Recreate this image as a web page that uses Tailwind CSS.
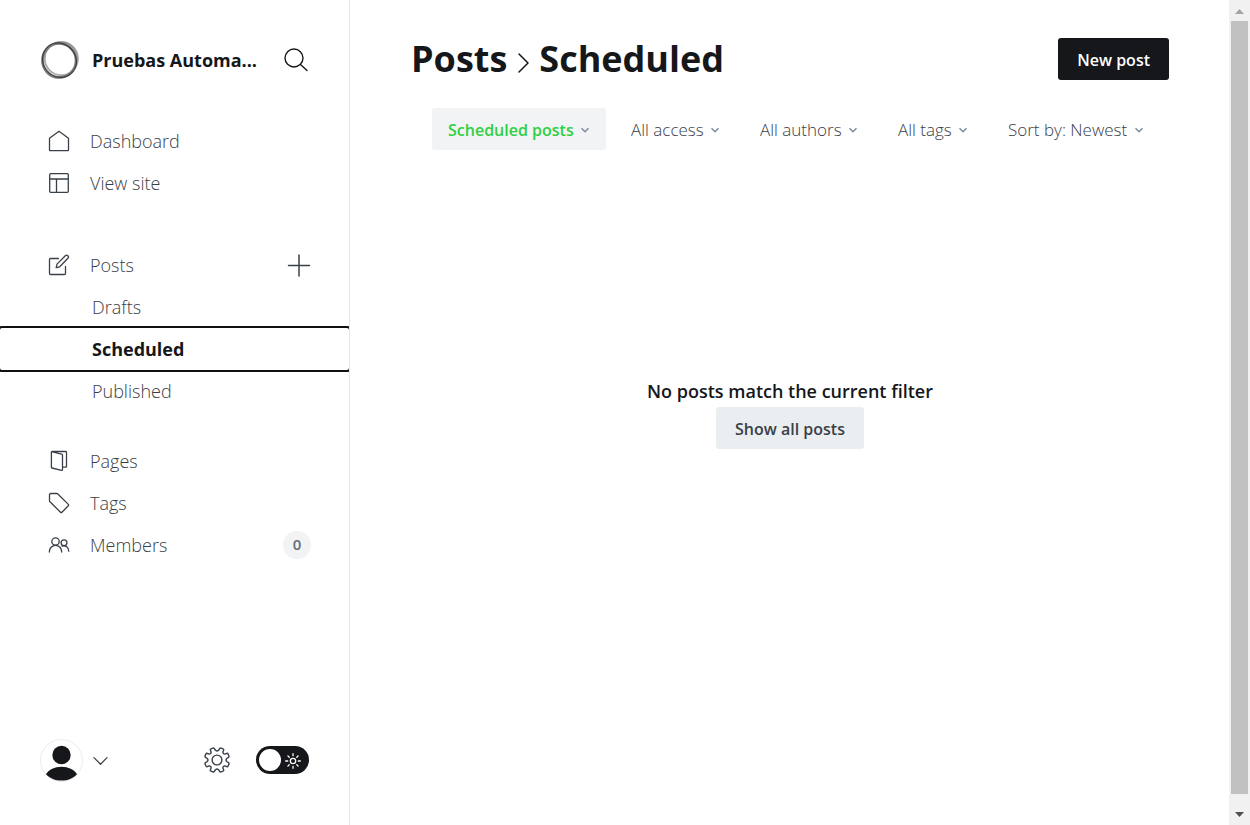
<!DOCTYPE html>
<html lang="en">
<head>
<meta charset="utf-8">
<meta name="viewport" content="width=device-width, initial-scale=1">
<title>Posts - Scheduled</title>
<script src="https://cdn.jsdelivr.net/npm/@tailwindcss/browser@4"></script>
</head>
<body class="flex h-screen overflow-hidden bg-white font-['Open_Sans','Noto_Sans',sans-serif] text-lg text-[#394047]">

<nav class="flex w-[350px] shrink-0 flex-col overflow-hidden border-r border-[#e5e7e9] bg-white font-light" aria-label="Main">
  <div class="flex h-[120px] items-center pl-10 pr-[41px]">
    <svg class="size-10 shrink-0" viewBox="0 0 40 40" fill="none" aria-hidden="true">
      <circle cx="19" cy="20.500" r="16.800" stroke="#444" stroke-width="2.200" opacity=".7"/>
      <circle cx="21.300" cy="18.600" r="16.600" stroke="#888" stroke-width="2" opacity=".7"/>
      <ellipse cx="20.300" cy="20" rx="18" ry="16.600" stroke="#777" stroke-width="2" opacity=".6" transform="rotate(115 20 20)"/>
      <ellipse cx="19.800" cy="20.500" rx="17.800" ry="16.300" stroke="#222" stroke-width="1.200" opacity=".7" transform="rotate(50 20 20)"/>
    </svg>
    <span class="ml-3 flex-1 truncate text-lg font-bold text-[#15171a]">Pruebas Automa...</span>
    <button class="flex size-6 shrink-0 items-center justify-center" aria-label="Search">
      <svg class="size-6" viewBox="0 0 24 24" fill="none" stroke="#15171a" stroke-width="1.4" stroke-linecap="round" aria-hidden="true"><circle cx="10" cy="10" r="9"/><path d="M16.5 16.5 23 22.5"/></svg>
    </button>
  </div>

  <ul>
    <li><a href="#" class="flex h-[42px] items-center gap-5 pl-12">
      <svg class="size-[22px]" viewBox="0 0 22 22" fill="none" stroke="currentColor" stroke-width="1.3" stroke-linejoin="round" aria-hidden="true"><path d="M1.5 8.2 11 1.3l9.500 6.900V20a.7.7 0 0 1-.7.700H2.200a.7.7 0 0 1-.7-.700Z"/></svg>
      Dashboard</a></li>
    <li><a href="#" class="flex h-[42px] items-center gap-5 pl-12">
      <svg class="size-[22px]" viewBox="0 0 22 22" fill="none" stroke="currentColor" stroke-width="1.3" aria-hidden="true"><rect x="1.700" y="1.700" width="18.600" height="18.600" rx="1"/><path d="M1.700 7h18.600M8.500 7v13.300"/></svg>
      View site</a></li>
  </ul>

  <ul class="mt-10">
    <li class="flex h-[42px] items-center justify-between pr-[38px]">
      <a href="#" class="flex items-center gap-5 pl-12">
      <svg class="size-[22px]" viewBox="0 0 22 22" fill="none" stroke="currentColor" stroke-width="1.3" stroke-linejoin="round" stroke-linecap="round" aria-hidden="true"><path d="M10.500 4.500H2.500a1 1 0 0 0-1 1V19.500a1 1 0 0 0 1 1H16.500a1 1 0 0 0 1-1V12.500M8.200 13.700l.8-3.600 8.300-8.300a1.750 1.750 0 0 1 2.600 2.500L11.700 12.800Z"/></svg>
      Posts</a>
      <button class="flex size-6 items-center justify-center" aria-label="New post">
        <svg class="size-6" viewBox="0 0 24 24" stroke="#394047" stroke-width="1.5" stroke-linecap="round" aria-hidden="true"><path d="M12 2v21M1.500 12.500h21"/></svg>
      </button>
    </li>
    <li><a href="#" class="flex h-[42px] items-center pl-[92px]">Drafts</a></li>
    <li><a href="#" aria-current="page" class="flex h-[42px] items-center rounded-[2px] pl-[92px] font-bold text-[#15171a] outline-2 outline-[#101010]">Scheduled</a></li>
    <li><a href="#" class="flex h-[42px] items-center pl-[92px]">Published</a></li>
  </ul>

  <ul class="mt-7">
    <li><a href="#" class="flex h-[42px] items-center gap-5 pl-12">
      <svg class="size-[22px]" viewBox="0 0 22 22" fill="none" stroke="currentColor" stroke-width="1.3" stroke-linejoin="round" aria-hidden="true"><path d="M3.500 1.700 13.700 4.200a1 1 0 0 1 .8.900V19.600a.8.800 0 0 1-1 .8L4 18a.8.800 0 0 1-.6-.8V2.300a.8.800 0 0 1 .8-.8H17.700a.8.800 0 0 1 .8.800V16.400a.8.800 0 0 1-.8.800H14.500"/></svg>
      Pages</a></li>
    <li><a href="#" class="flex h-[42px] items-center gap-5 pl-12">
      <svg class="size-[22px]" viewBox="0 0 22 22" fill="none" stroke="currentColor" stroke-width="1.3" stroke-linejoin="round" aria-hidden="true"><path d="M1.500 2.700a1.200 1.200 0 0 1 1.200-1.200H8.600a1.800 1.800 0 0 1 1.300.5L20.300 12.400a1 1 0 0 1 0 1.400L13.900 20.200a1 1 0 0 1-1.400 0L2 9.800A1.800 1.800 0 0 1 1.500 8.500Z"/></svg>
      Tags</a></li>
    <li class="flex h-[42px] items-center justify-between pr-[38px]">
      <a href="#" class="flex items-center gap-5 pl-12">
      <svg class="size-[22px]" viewBox="0 0 22 22" fill="none" stroke="currentColor" stroke-width="1.300" stroke-linecap="round" aria-hidden="true"><circle cx="7.500" cy="7.500" r="3.700"/><circle cx="16" cy="8.800" r="2.900"/><path d="M1.300 18c0-3.700 2.600-6.700 6.200-6.700s6.200 3 6.200 6.700M14 12.100c3.700-1.300 6.800 1.500 6.800 5.100"/></svg>
      Members</a>
      <span class="flex size-7 items-center justify-center rounded-full bg-[#f1f3f4] text-[15px] font-semibold text-[#626d79]">0</span>
    </li>
  </ul>

  <div class="mt-auto flex h-[130px] items-center pl-10 pr-10">
    <button class="flex items-center gap-2.5" aria-label="Account menu">
      <svg class="size-[43px]" viewBox="0 0 43 43" fill="none" aria-hidden="true"><circle cx="21.500" cy="21.500" r="21" stroke="#e8eaec"/><circle cx="21.500" cy="16" r="9.200" fill="#15171a"/><path d="M6 35.200C9 30.500 14.500 27.700 21.500 27.700S34 30.500 37 35.200C33 39.300 28 41.500 21.500 41.500S10 39.300 6 35.200Z" fill="#15171a"/></svg>
      <svg class="size-[15px]" viewBox="0 0 16 16" fill="none" stroke="#394047" stroke-width="1.300" stroke-linecap="round" stroke-linejoin="round" aria-hidden="true"><path d="m1 5 7 7 7-7"/></svg>
    </button>
    <a href="#" class="ml-auto" aria-label="Settings">
      <svg class="size-[26px]" viewBox="-13 -13 26 26" fill="none" stroke="#394047" stroke-width="1.400" stroke-linejoin="round" aria-hidden="true"><circle r="4.900"/><path d="M-1.500-9.700Q0-8.400 1.500-9.700L2.700-11.500Q3.200-12.300 4.100-11.900L6-11.100Q6.900-10.700 6.700-9.900L5.900-7.900Q5.900-5.900 7.900-5.900L9.900-6.700Q10.700-6.900 11.100-6L11.900-4.100Q12.300-3.200 11.500-2.700L9.700-1.500Q8.400 0 9.700 1.500L11.500 2.700Q12.300 3.200 11.900 4.100L11.100 6Q10.700 6.900 9.900 6.700L7.900 5.900Q5.900 5.900 5.900 7.900L6.700 9.900Q6.900 10.700 6 11.100L4.100 11.900Q3.200 12.300 2.700 11.500L1.500 9.700Q0 8.400-1.500 9.700L-2.700 11.500Q-3.200 12.300-4.100 11.900L-6 11.100Q-6.900 10.700-6.700 9.900L-5.900 7.900Q-5.900 5.900-7.900 5.900L-9.900 6.700Q-10.700 6.900-11.100 6L-11.900 4.100Q-12.300 3.200-11.500 2.700L-9.700 1.500Q-8.400 0-9.700-1.500L-11.500-2.700Q-12.300-3.200-11.900-4.100L-11.100-6Q-10.700-6.900-9.900-6.700L-7.900-5.900Q-5.900-5.900-5.900-7.900L-6.700-9.900Q-6.900-10.700-6-11.100L-4.100-11.900Q-3.200-12.300-2.700-11.500Z"/></svg>
    </a>
    <label class="ml-[26px] flex h-7 w-[53px] items-center justify-between rounded-full bg-[#15171a] pl-[3px] pr-2">
      <input type="checkbox" class="size-[22px] appearance-none rounded-full bg-white" aria-label="Dark mode">
      <svg class="mt-0.5 size-4" viewBox="0 0 16 16" fill="none" stroke="#fff" stroke-width="1.300" stroke-linecap="round" aria-hidden="true"><circle cx="8" cy="8" r="2.700"/><path d="M8 .7v2M8 13.300v2M.7 8h2M13.300 8h2M2.900 2.900l1.300 1.300M11.800 11.800l1.300 1.300M2.900 13.100l1.300-1.300M11.800 4.200l1.300-1.300"/></svg>
    </label>
  </div>
</nav>

<main class="flex min-w-0 flex-1 flex-col pl-[61px] pr-[60px]">
  <header>
    <div class="flex h-[108px] items-center justify-between pt-2.5">
      <h1 class="flex items-center gap-2 text-4xl font-bold text-[#15171a]">
        <a href="#">Posts</a>
        <svg class="mt-2 h-5 w-4" viewBox="0 0 16 20" fill="none" stroke="currentColor" stroke-width="1.500" stroke-linecap="round" stroke-linejoin="round" aria-hidden="true"><path d="m4 1 9 9-9 9"/></svg>
        Scheduled
      </h1>
      <button class="h-[42px] rounded-[3px] bg-[#15171a] px-[19px] pt-0.5 text-base font-semibold text-white">New post</button>
    </div>
    <div class="flex justify-end gap-2.5 pr-2.5 text-[17px] font-light">
      <label class="flex h-[42px] items-center gap-1.5 rounded-[3px] bg-[#f1f3f4] px-4 text-base font-semibold text-[#30cf43]">
        <select class="appearance-none pt-0.5" aria-label="Post type"><option>Scheduled posts</option></select>
        <svg class="mt-0.5 h-2 w-2.5" viewBox="0 0 10 8" fill="none" stroke="#7c8b9a" stroke-width="1.500" aria-hidden="true"><path d="m1.500 2.200 3.500 3.500 3.500-3.500"/></svg>
      </label>
      <label class="flex h-[42px] items-center gap-1.5 px-[15px]">
        <select class="appearance-none pt-0.5" aria-label="Access"><option>All access</option></select>
        <svg class="mt-0.5 h-2 w-2.5" viewBox="0 0 10 8" fill="none" stroke="#7c8b9a" stroke-width="1.500" aria-hidden="true"><path d="m1.500 2.200 3.500 3.500 3.500-3.500"/></svg>
      </label>
      <label class="flex h-[42px] items-center gap-1.5 px-[15px]">
        <select class="appearance-none pt-0.5" aria-label="Author"><option>All authors</option></select>
        <svg class="mt-0.5 h-2 w-2.5" viewBox="0 0 10 8" fill="none" stroke="#7c8b9a" stroke-width="1.500" aria-hidden="true"><path d="m1.500 2.200 3.500 3.500 3.500-3.500"/></svg>
      </label>
      <label class="flex h-[42px] items-center gap-1.5 px-[15px]">
        <select class="appearance-none pt-0.5" aria-label="Tag"><option>All tags</option></select>
        <svg class="mt-0.5 h-2 w-2.5" viewBox="0 0 10 8" fill="none" stroke="#7c8b9a" stroke-width="1.500" aria-hidden="true"><path d="m1.500 2.200 3.500 3.500 3.500-3.500"/></svg>
      </label>
      <label class="flex h-[42px] items-center gap-1.5 px-[15px]">
        <select class="appearance-none pt-0.5" aria-label="Sort order"><option>Sort by: Newest</option></select>
        <svg class="mt-0.5 h-2 w-2.5" viewBox="0 0 10 8" fill="none" stroke="#7c8b9a" stroke-width="1.500" aria-hidden="true"><path d="m1.500 2.200 3.500 3.500 3.500-3.500"/></svg>
      </label>
    </div>
  </header>
  <section class="flex flex-1 flex-col items-center justify-center pb-[152px]">
    <h4 class="text-lg leading-8 font-semibold text-[#15171a]">No posts match the current filter</h4>
    <a href="#" class="flex h-[42px] items-center rounded-[3px] bg-[#ebeef0] px-[19px] pt-0.5 text-base font-semibold">Show all posts</a>
  </section>
</main>

<div class="flex w-[21px] shrink-0 flex-col items-center bg-[#f1f1f1]" aria-hidden="true">
  <div class="flex h-[21px] items-center pt-0.5"><svg class="h-[5px] w-[9px]" viewBox="0 0 9 5" fill="#a3a3a3"><path d="M0 5 4.500 0 9 5Z"/></svg></div>
  <div class="mb-2.5 w-[17px] flex-1 bg-[#c1c1c1]"></div>
  <div class="flex h-[21px] items-center"><svg class="h-[5px] w-[9px]" viewBox="0 0 9 5" fill="#505050"><path d="M0 0 4.500 5 9 0Z"/></svg></div>
</div>
</body>
</html>
